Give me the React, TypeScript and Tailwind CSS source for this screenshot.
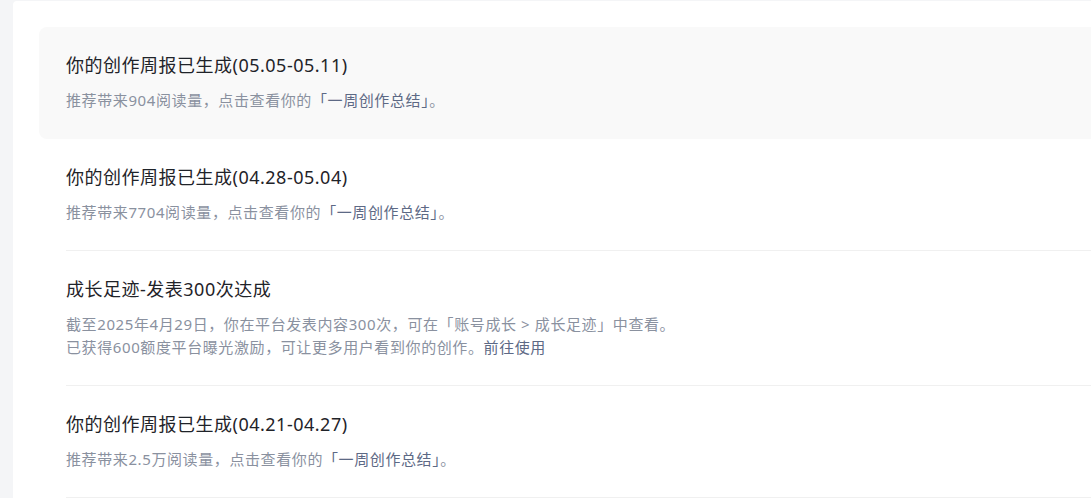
const items = [
  {
    title: '你的创作周报已生成(05.05-05.11)',
    lines: [['推荐带来904阅读量，点击查看你的', '「一周创作总结」', '。']],
    active: true,
  },
  {
    title: '你的创作周报已生成(04.28-05.04)',
    lines: [['推荐带来7704阅读量，点击查看你的', '「一周创作总结」', '。']],
  },
  {
    title: '成长足迹-发表300次达成',
    lines: [
      ['截至2025年4月29日，你在平台发表内容300次，可在「账号成长 > 成长足迹」中查看。', '', ''],
      ['已获得600额度平台曝光激励，可让更多用户看到你的创作。', '前往使用', ''],
    ],
  },
  {
    title: '你的创作周报已生成(04.21-04.27)',
    lines: [['推荐带来2.5万阅读量，点击查看你的', '「一周创作总结」', '。']],
  },
];

export default function App() {
  return (
    <div
      className="h-screen overflow-hidden bg-[#f4f5f7] pt-px pl-[13px]"
      style={{ fontFamily: '"Noto Sans", "Noto Sans CJK SC", sans-serif' }}
    >
      <div className="h-full rounded-tl bg-white pt-[26px] pl-[26px]">
        {items.map((item, i) => (
          <div
            key={i}
            className={item.active ? 'rounded-l-lg bg-[#f9f9f9] pl-[27px]' : 'pl-[27px]'}
          >
            <div
              className={
                item.active
                  ? 'border-b border-transparent pt-[26px] pb-[26px]'
                  : 'border-b border-[#f0f0f0] pt-[26px] pb-[26px]'
              }
            >
              <div className="text-[18px] leading-[24px] tracking-[0.5px] text-[#1f2329] whitespace-nowrap">
                {item.title}
              </div>
              <div className="mt-[12px]">
                {item.lines.map((l, j) => (
                  <div
                    key={j}
                    className="text-[15px] leading-[23px] tracking-[0.6px] text-[#8a919f] whitespace-nowrap"
                  >
                    {l[0]}
                    {l[1] && <span className="text-[#5d6985]">{l[1]}</span>}
                    {l[2]}
                  </div>
                ))}
              </div>
            </div>
          </div>
        ))}
      </div>
    </div>
  );
}
